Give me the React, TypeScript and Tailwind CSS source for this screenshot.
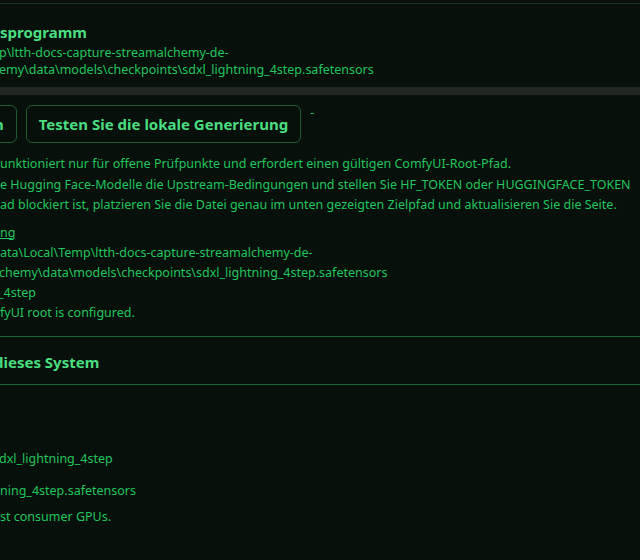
import React from "react";

const pathLines = [
  "p\\ltth-docs-capture-streamalchemy-de-",
  "emy\\data\\models\\checkpoints\\sdxl_lightning_4step.safetensors",
];

const notes = [
  "unktioniert nur für offene Prüfpunkte und erfordert einen gültigen ComfyUI-Root-Pfad.",
  "e Hugging Face-Modelle die Upstream-Bedingungen und stellen Sie HF_TOKEN oder HUGGINGFACE_TOKEN",
  "ad blockiert ist, platzieren Sie die Datei genau im unten gezeigten Zielpfad und aktualisieren Sie die Seite.",
];

export default function App() {
  return (
    <div className="h-[560px] w-[640px] overflow-hidden bg-[#07100a] font-['Noto_Sans','Open_Sans',sans-serif] text-[12.5px] text-[#22c55e]">
      <div className="h-[3px]" />

      <section className="border-t border-[#1d3325] pt-[18px]">
        <h2 className="whitespace-nowrap text-[15px] font-bold leading-5 text-[#4ade80]">sprogramm</h2>
        <div className="mt-[2px] whitespace-nowrap leading-[17px]">
          {pathLines.map((line, i) => (
            <div key={i} className="-ml-[1px]">
              {line}
            </div>
          ))}
        </div>

        <div className="mt-[9px] h-[8px] bg-[#212824]" />

        <div className="mt-[10px] flex items-start">
          <button className="-ml-[19px] rounded-md border border-[#1d5a2e] px-[12px] py-[8px] text-[15px] font-bold leading-5 text-[#4ade80]">
            n
          </button>
          <button className="ml-[9px] whitespace-nowrap rounded-md border border-[#1d5a2e] px-[12px] py-[8px] text-[15px] font-bold leading-5 text-[#4ade80]">
            Testen Sie die lokale Generierung
          </button>
          <span className="ml-[9px] text-[12px] leading-4">-</span>
        </div>

        <div className="mt-[11px] whitespace-nowrap leading-[20.5px]">
          {notes.map((line, i) => (
            <p key={i}>{line}</p>
          ))}
        </div>

        <div className="mt-[7px] whitespace-nowrap leading-5">
          <a className="block underline">ng</a>
          <div>ata\Local\Temp\ltth-docs-capture-streamalchemy-de-</div>
          <div className="-ml-[1px]">chemy\data\models\checkpoints\sdxl_lightning_4step.safetensors</div>
          <div className="-ml-[2px]">_4step</div>
          <div>fyUI root is configured.</div>
        </div>
      </section>

      <section className="mt-[13px] border-y border-[#17662f] pb-[12px] pt-[15px]">
        <h2 className="-ml-[6px] whitespace-nowrap text-[15px] font-bold leading-5 text-[#4ade80]">dieses System</h2>
      </section>

      <div className="whitespace-nowrap leading-5">
        <div className="mt-[64px] -ml-[7px]">sdxl_lightning_4step</div>
        <div className="mt-[12px]">ning_4step.safetensors</div>
        <div className="mt-[6px]">st consumer GPUs.</div>
      </div>
    </div>
  );
}
